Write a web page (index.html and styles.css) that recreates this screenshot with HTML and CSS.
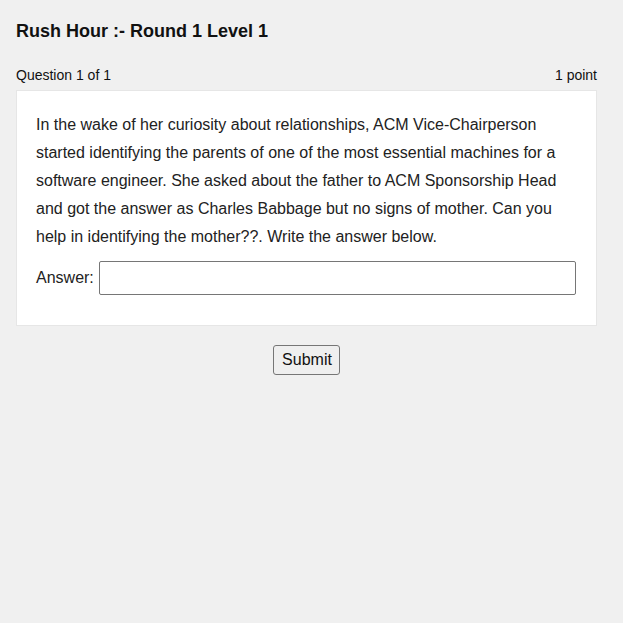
FILE: index.html
```html
<!DOCTYPE html>
<html>
<head>
<meta charset="utf-8">
<link rel="stylesheet" href="styles.css">
</head>
<body>
<div class="page">
  <h1 class="title">Rush Hour :- Round 1 Level 1</h1>
  <div class="meta">
    <span>Question 1 of 1</span>
    <span>1 point</span>
  </div>
  <div class="card">
    <p class="question">In the wake of her curiosity about relationships, ACM Vice-Chairperson started identifying the parents of one of the most essential machines for a software engineer. She asked about the father to ACM Sponsorship Head and got the answer as Charles Babbage but no signs of mother. Can you help in identifying the mother??. Write the answer below.</p>
    <div class="answer">
      <label class="answer-label" for="ans">Answer:</label>
      <input class="answer-input" id="ans" type="text">
    </div>
  </div>
  <div class="actions">
    <button class="submit" type="button">Submit</button>
  </div>
</div>
</body>
</html>
```
FILE: styles.css
```css
html, body {
  margin: 0;
  padding: 0;
  background: #f0f0f0;
  font-family: "Liberation Sans", Arial, sans-serif;
  color: #111;
}
.page {
  width: 581px;
  padding: 20px 0 0 16px;
}
.title {
  margin: 0;
  font-size: 18px;
  font-weight: bold;
  line-height: 22px;
  color: #111;
}
.meta {
  display: flex;
  justify-content: space-between;
  font-size: 14px;
  line-height: 16px;
  margin-top: 25px;
  margin-bottom: 7px;
}
.card {
  background: #fff;
  border: 1px solid #e6e6e6;
  padding: 20px 20px 30px 19px;
}
.question {
  margin: 0;
  font-size: 16px;
  line-height: 28px;
  color: #222;
}
.answer {
  display: flex;
  align-items: center;
  margin-top: 10px;
}
.answer-label {
  font-size: 16px;
  color: #222;
  margin-right: 5px;
}
.answer-input {
  flex: 1;
  height: 34px;
  box-sizing: border-box;
  border: 1px solid #767676;
  border-radius: 2px;
  background: #fff;
  margin: 0;
}
.actions {
  display: flex;
  justify-content: center;
  margin-top: 19px;
}
.submit {
  font-family: "Liberation Sans", Arial, sans-serif;
  font-size: 16px;
  height: 30px;
  padding: 0 7px 0 8px;
  background: #efefef;
  border: 1px solid #767676;
  border-radius: 3px;
  color: #111;
}
```
